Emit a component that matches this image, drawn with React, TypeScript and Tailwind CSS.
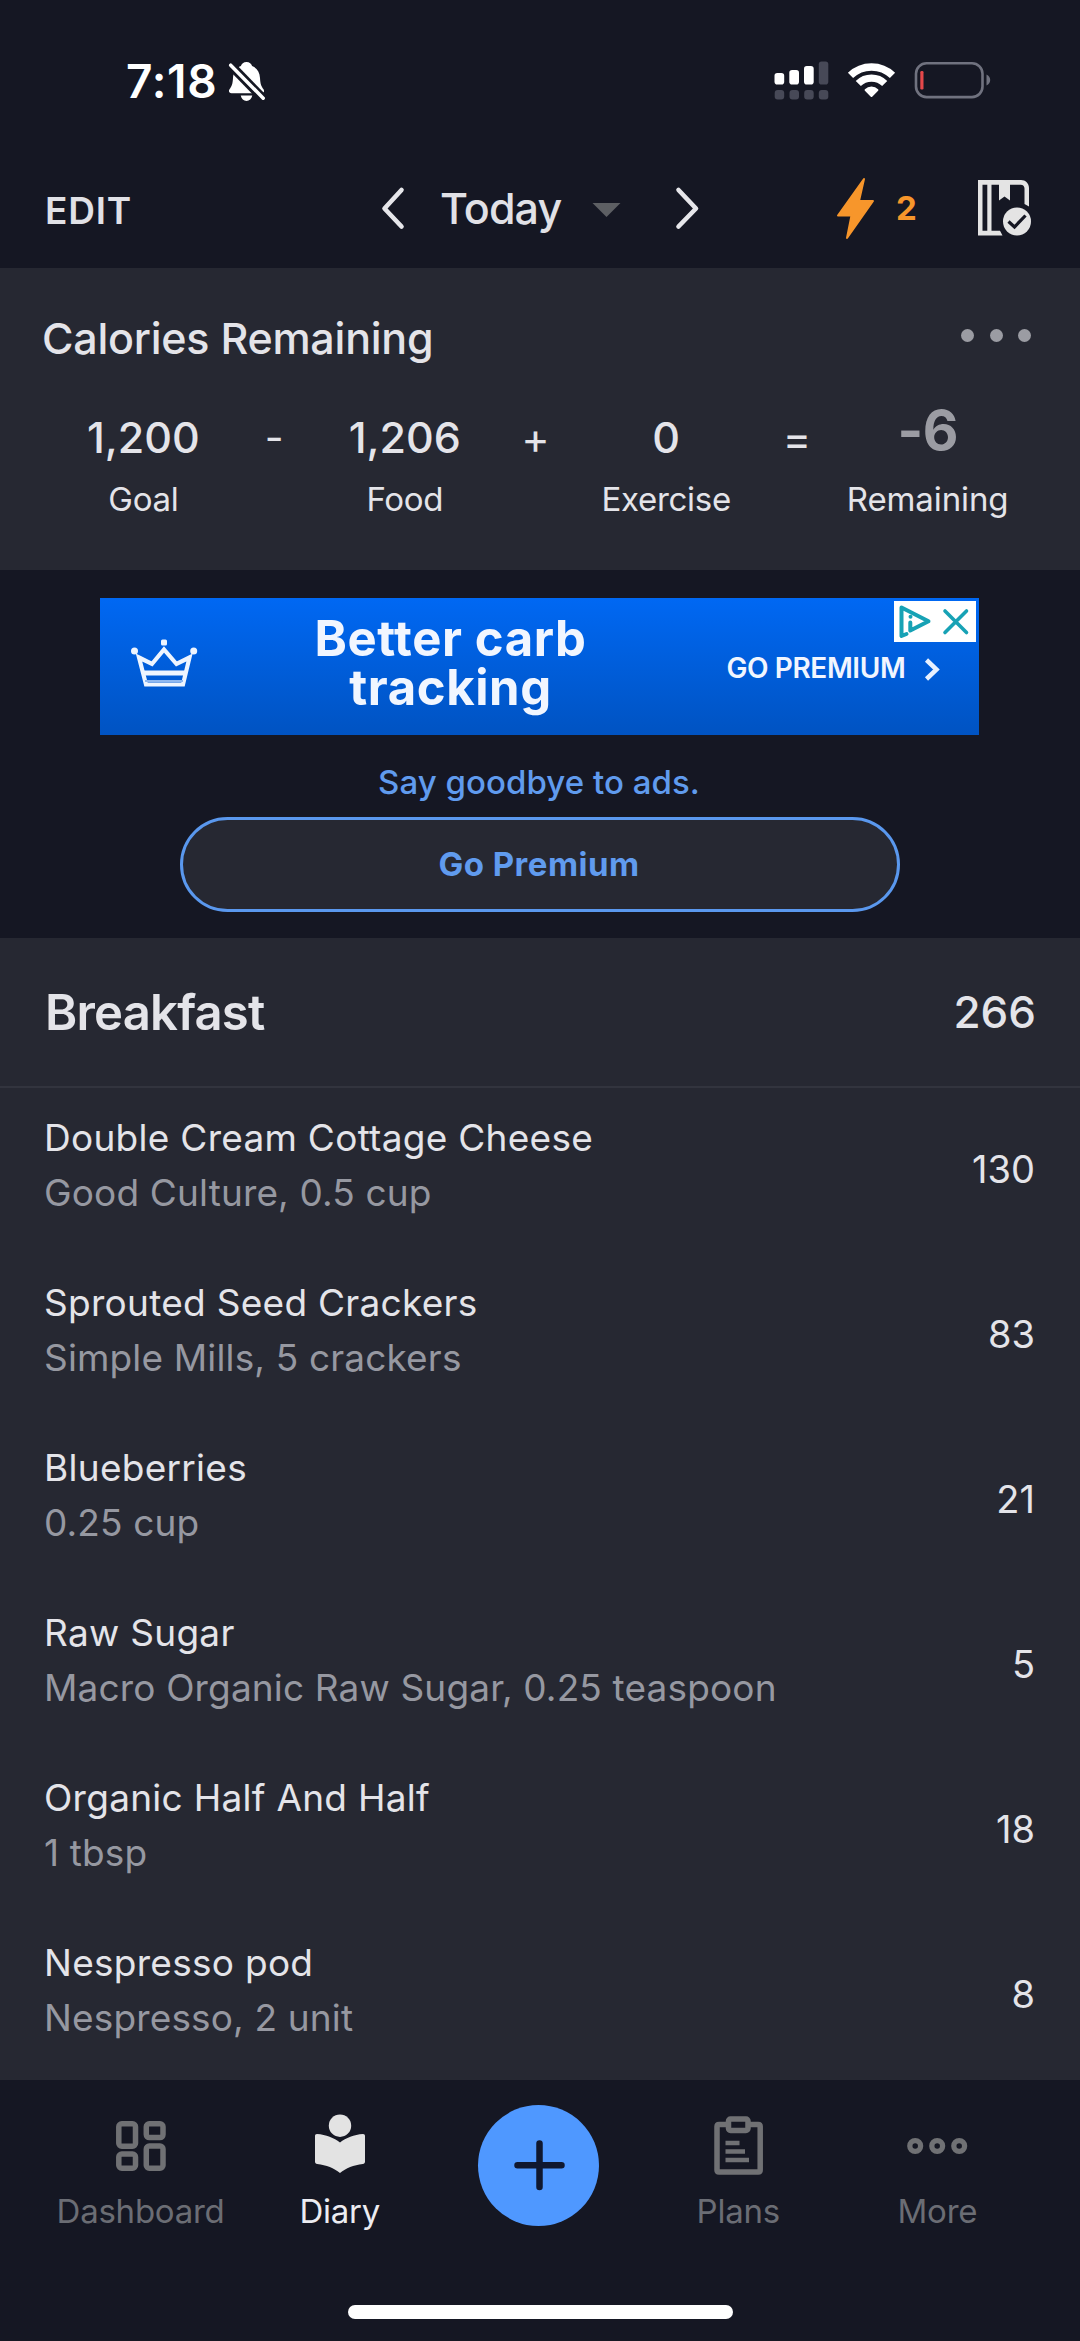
import React from 'react';

const items = [
  { name: 'Double Cream Cottage Cheese', detail: 'Good Culture, 0.5 cup', kcal: '130' },
  { name: 'Sprouted Seed Crackers', detail: 'Simple Mills, 5 crackers', kcal: '83' },
  { name: 'Blueberries', detail: '0.25 cup', kcal: '21' },
  { name: 'Raw Sugar', detail: 'Macro Organic Raw Sugar, 0.25 teaspoon', kcal: '5' },
  { name: 'Organic Half And Half', detail: '1 tbsp', kcal: '18' },
  { name: 'Nespresso pod', detail: 'Nespresso, 2 unit', kcal: '8' },
];

function StatusBar() {
  return (
    <div className="flex h-[162px] items-center pl-[126px] text-white">
      <span className="w-[99px] text-[46px] leading-none font-semibold tracking-[0.7px]">7:18</span>
      <svg width="44" height="44" viewBox="225 59 44 44">
        <path
          fill="#fff"
          d="M246.5 62c-3 0-5 1.700-5.600 4-5 2-7.600 6.400-7.900 12-.3 6-1.300 8.300-3.500 11.300-1.300 2-.4 4 2 4h30c2.400 0 3.300-2 2-4-2.200-3-3.200-5.300-3.500-11.300-.3-5.600-2.900-10-7.900-12-.6-2.300-2.600-4-5.600-4ZM240.700 95.500h11.600c-.7 3.400-3 5.500-5.800 5.500s-5.100-2.100-5.800-5.500Z"
        />
        <path d="M229.500 64l36 37" stroke="#151723" strokeWidth="9" />
        <path d="M230.700 65.200l32.500 33" stroke="#fff" strokeWidth="3.500" strokeLinecap="round" />
      </svg>
      <svg className="ml-[501px]" width="62" height="44" viewBox="770 59 62 44">
        <g fill="#fff">
          <rect x="774.500" y="73" width="9.700" height="11.500" rx="2.800" />
          <rect x="789.300" y="70" width="9.700" height="14.500" rx="2.800" />
          <rect x="804" y="66" width="9.700" height="18.500" rx="2.800" />
        </g>
        <g fill="#474957">
          <rect x="818.800" y="61.500" width="9.500" height="23" rx="2.800" />
          <rect x="774.700" y="90" width="9.500" height="9.500" rx="3" />
          <rect x="789.500" y="90" width="9.500" height="9.500" rx="3" />
          <rect x="804.200" y="90" width="9.500" height="9.500" rx="3" />
          <rect x="818.800" y="90" width="9.500" height="9.500" rx="3" />
        </g>
      </svg>
      <svg className="ml-[12px]" width="56" height="44" viewBox="844 59 56 44" fill="none" stroke="#fff">
        <path d="M850.500 75.400A30.200 30.200 0 0 1 892.500 75.400" strokeWidth="7.500" />
        <path d="M858.300 83.500A18.800 18.800 0 0 1 884.700 83.500" strokeWidth="7.300" />
        <path d="M871.500 96L865.600 90a8.500 8.500 0 0 1 11.800 0Z" fill="#fff" strokeWidth="2" strokeLinejoin="round" />
      </svg>
      <svg className="ml-[10px]" width="84" height="44" viewBox="910 59 84 44">
        <rect x="916" y="63.300" width="66.500" height="33.800" rx="10.500" fill="none" stroke="#70727f" strokeWidth="2.600" />
        <path d="M986.500 74.500c2.300.9 3.700 3 3.700 5.500s-1.400 4.600-3.700 5.500Z" fill="#70727f" />
        <rect x="920.300" y="71" width="3.200" height="18.500" rx="1.200" fill="#e5484a" />
      </svg>
    </div>
  );
}

function Toolbar() {
  return (
    <div className="flex h-[97px] items-center pl-[45px] text-[#e1e1e6]">
      <span className="w-[333px] text-[37px] leading-none font-semibold tracking-[0.8px]">EDIT</span>
      <svg width="29" height="49" viewBox="378 186 29 49">
        <path d="M401.500 190L384.500 208.500l17 18" fill="none" stroke="#e6e6ea" strokeWidth="4.600" strokeLinecap="round" strokeLinejoin="round" />
      </svg>
      <span className="ml-[33px] w-[147px] pb-1 text-[43px] leading-none font-medium tracking-[-0.9px]">Today</span>
      <svg width="38" height="30" viewBox="587 195 38 30">
        <path d="M592.500 202h28L606.500 216Z" fill="#5d5f63" />
      </svg>
      <svg className="ml-[47px]" width="29" height="49" viewBox="672 186 29 49">
        <path d="M678.500 190l17.500 18.500-17.500 18" fill="none" stroke="#e6e6ea" strokeWidth="4.600" strokeLinecap="round" strokeLinejoin="round" />
      </svg>
      <svg className="ml-[131px]" width="48" height="70" viewBox="832 175 48 70">
        <path d="M864 178l-26 36.500h13.500L847 237l26-37h-14Z" fill="#f7962b" stroke="#f7962b" strokeWidth="2" strokeLinejoin="round" />
      </svg>
      <span className="ml-[16px] w-[77px] pb-1 text-[33px] leading-none font-bold text-[#f7962b]">2</span>
      <svg width="62" height="70" viewBox="973 175 62 70">
        <path d="M978 179h43c4.500 0 8 3.500 8 8v18.500l-4.500-2.500v-15.500c0-2.300-1.500-3.800-3.800-3.800H1010v15.800l-5.500-4-5.500 4v-15.800h-7.500v46h8.500l2.500 4.800H978Zm4.500 4.700v46h4.800v-46Z" fillRule="evenodd" fill="#e4e4e4" />
        <circle cx="1017" cy="220.500" r="14" fill="#e4e4e4" />
        <path d="M1008.500 220.500l6 5.500 11-11.500" fill="none" stroke="#151723" strokeWidth="3.200" />
      </svg>
    </div>
  );
}

const operator = 'text-[43px] leading-[46px]';

function Stat({ value, label }: { value: string; label: string }) {
  return (
    <div className="flex flex-col items-center">
      <span className="text-[43px] leading-[44px] font-medium">{value}</span>
      <span className="mt-[20px] text-[33px] leading-[40px] tracking-[-0.3px]">{label}</span>
    </div>
  );
}

function Summary() {
  return (
    <section className="h-[302px] bg-[#262832] pt-[46px] text-[#e4e4e9]">
      <div className="flex h-[48px] items-center justify-between pr-[49px] pl-[42px]">
        <h2 className="text-[43px] leading-none font-medium tracking-[-0.25px]">Calories Remaining</h2>
        <div className="flex gap-[15.500px] pb-[6px]">
          <i className="size-[13px] rounded-full bg-[#9b9ca3]" />
          <i className="size-[13px] rounded-full bg-[#9b9ca3]" />
          <i className="size-[13px] rounded-full bg-[#9b9ca3]" />
        </div>
      </div>
      <div className="mt-[53px] grid grid-cols-7 pr-[87px] pl-[78px] text-center">
        <Stat value="1,200" label="Goal" />
        <span className="text-[41px] leading-[44px]">-</span>
        <Stat value="1,206" label="Food" />
        <span className={operator}>+</span>
        <Stat value="0" label="Exercise" />
        <span className={operator}>=</span>
        <div className="flex flex-col items-center">
          <span className="-mt-[7px] text-[55px] leading-[44px] font-bold tracking-[-0.7px] text-[#9b9ca3]">-6</span>
          <span className="mt-[27px] text-[33px] leading-[40px] tracking-[-0.1px]">Remaining</span>
        </div>
      </div>
    </section>
  );
}

function AdBlock() {
  return (
    <section className="flex h-[368px] flex-col items-center pt-[28px] pr-[2px]">
      <div className="relative flex h-[137px] w-[879px] bg-linear-to-b from-[#0068f3] to-[#0053c2] text-[#f1f6ff]">
        <svg className="mt-[36px] ml-[26px]" width="76" height="60" viewBox="125 634 76 60" fill="none" stroke="#eef5ff" strokeWidth="4.200">
          <path d="M138 657.500l13 6.500 12-14.500 12.500 14.500 13-6.500-6.500 27h-37Z" />
          <path d="M142 673h42" strokeWidth="5" />
          <path d="M144 681h38" stroke="#8fb8f0" strokeWidth="2" />
          <g fill="#eef5ff" stroke="none">
            <circle cx="133.500" cy="651" r="3.500" />
            <rect x="160" y="639.500" width="6" height="6" rx="1.500" />
            <circle cx="192.700" cy="651" r="3.500" />
          </g>
        </svg>
        <div className="mt-[16px] ml-[99px] w-[300px] text-center text-[49px] leading-[49px] font-bold tracking-[0.6px] whitespace-nowrap">
          Better carb
          <br />
          tracking
        </div>
        <div className="mt-[56px] ml-[126px] text-[28px] leading-[28px] font-semibold tracking-[-0.4px] whitespace-nowrap">GO PREMIUM</div>
        <svg className="mt-[56px] ml-[13px]" width="30" height="32" viewBox="917 654 30 32">
          <path d="M925.500 660l10 9.500-10 9.500" fill="none" stroke="#e8f1ff" strokeWidth="4.500" />
        </svg>
        <div className="absolute top-[3px] right-[3px] flex h-[41px] w-[82px] items-center bg-white">
          <svg width="82" height="41" viewBox="894 601 82 41" fill="none" stroke="#17a2b5" strokeLinecap="round" strokeLinejoin="round">
            <path d="M906.500 634l-5 2V607.500l27 13.800L910.300 630.500v-8" strokeWidth="4" />
            <circle cx="910.500" cy="616.800" r="2" fill="#17a2b5" stroke="none" />
            <path d="M945 611l21.500 21.500M966.500 611L945 632.500" strokeWidth="3.600" />
          </svg>
        </div>
      </div>
      <p className="mt-[27px] text-[33px] leading-[40px] font-medium tracking-[0.05px] text-[#609bee]">Say goodbye to ads.</p>
      <button className="mt-[15px] flex h-[95px] w-[720px] translate-x-px items-center justify-center rounded-full border-3 border-[#5a98ee] bg-[#262832] pr-[2px] text-[33px] font-bold tracking-[0.500px] text-[#609bee]">
        Go Premium
      </button>
    </section>
  );
}

function Meal() {
  return (
    <section className="h-[1142px] bg-[#262832] text-[#e4e4e9]">
      <header className="flex h-[150px] items-center justify-between border-b-2 border-[#32343e] pr-[44px] pl-[45px]">
        <h2 className="text-[49px] leading-none font-semibold tracking-[-0.8px]">Breakfast</h2>
        <span className="text-[44px] leading-none font-medium">266</span>
      </header>
      <ul className="-mt-px">
        {items.map((it) => (
          <li key={it.name} className="flex h-[165px] items-center justify-between pr-[45px] pl-[44px]">
            <div className="pb-[9px] text-[37px] leading-[55px]">
              <div className="tracking-[0.28px]">{it.name}</div>
              <div className="tracking-[0.15px] text-[#9698a1]">{it.detail}</div>
            </div>
            <span className="pb-px text-[38px] leading-none">{it.kcal}</span>
          </li>
        ))}
      </ul>
    </section>
  );
}

function Tab({ label, active, children }: { label: string; active?: boolean; children: React.ReactNode }) {
  return (
    <div className={active ? 'flex flex-col items-center text-[#ececf1]' : 'flex flex-col items-center text-[#6b6d74]'}>
      {children}
      <span className="mt-[10px] text-[33px] leading-[40px] tracking-[-0.250px]">{label}</span>
    </div>
  );
}

function TabBar() {
  return (
    <nav className="h-[261px] pt-[25px]">
      <div className="grid h-[200px] grid-cols-5 items-start pr-[43px] pl-[41px]">
        <Tab label="Dashboard">
          <svg width="76" height="76" viewBox="103 2105 76 76" fill="none" stroke="#707174" strokeWidth="5.500">
            <rect x="118.800" y="2123.800" width="16.700" height="22.500" rx="3" />
            <rect x="118.800" y="2154" width="16.700" height="14.300" rx="3" />
            <rect x="146.300" y="2123.800" width="16.700" height="13.800" rx="3" />
            <rect x="146.300" y="2146" width="16.700" height="22.300" rx="3" />
          </svg>
        </Tab>
        <Tab label="Diary" active>
          <svg width="76" height="76" viewBox="302 2105 76 76" fill="#e3e3e3">
            <circle cx="340" cy="2125.700" r="11.200" />
            <path d="M317 2134c9 .5 17 3.800 23 8.600 6-4.800 14-8.100 23-8.600 1.300 0 2 .8 2 2v25.500c0 1.400-.8 2.200-2.200 2.400-9.300 1-16.800 4-22.800 9.100-6-5.100-13.500-8.100-22.800-9.100-1.400-.2-2.200-1-2.200-2.400V2136c0-1.200.7-2 2-2Z" />
          </svg>
        </Tab>
        <div className="flex justify-center">
          <div className="flex size-[121px] items-center justify-center rounded-full bg-[#4f98ff]">
            <svg width="56" height="56" viewBox="0 0 56 56" stroke="#10182f" strokeWidth="6.500" strokeLinecap="round">
              <path d="M28.500 5.500v43.500M6.500 27.300h44" />
            </svg>
          </div>
        </div>
        <Tab label="Plans">
          <svg width="76" height="76" viewBox="700 2105 76 76" fill="none" stroke="#707174" strokeWidth="5.500">
            <path d="M726 2124.500h-7q-2 0-2 2v43.500q0 2 2 2h39.200q2 0 2-2V2126.500q0-2-2-2H750" />
            <rect x="728.500" y="2119" width="19.500" height="11.500" rx="2" />
            <path d="M725.500 2143h14M725.500 2151.500h19.500M725.500 2160h23.500" strokeWidth="4.300" />
          </svg>
        </Tab>
        <Tab label="More">
          <svg width="76" height="76" viewBox="899 2105 76 76" fill="none" stroke="#707174" strokeWidth="5.300">
            <circle cx="915.200" cy="2146" r="5.400" />
            <circle cx="937.200" cy="2146" r="5.400" />
            <circle cx="959.200" cy="2146" r="5.400" />
          </svg>
        </Tab>
      </div>
      <div className="mx-auto h-[14px] w-[385px] rounded-full bg-white" />
    </nav>
  );
}

export default function App() {
  return (
    <div className="h-[2341px] w-[1080px] overflow-hidden bg-[#151723] font-['Inter',sans-serif]">
      <header className="h-[268px]">
        <StatusBar />
        <Toolbar />
      </header>
      <Summary />
      <AdBlock />
      <Meal />
      <TabBar />
    </div>
  );
}
